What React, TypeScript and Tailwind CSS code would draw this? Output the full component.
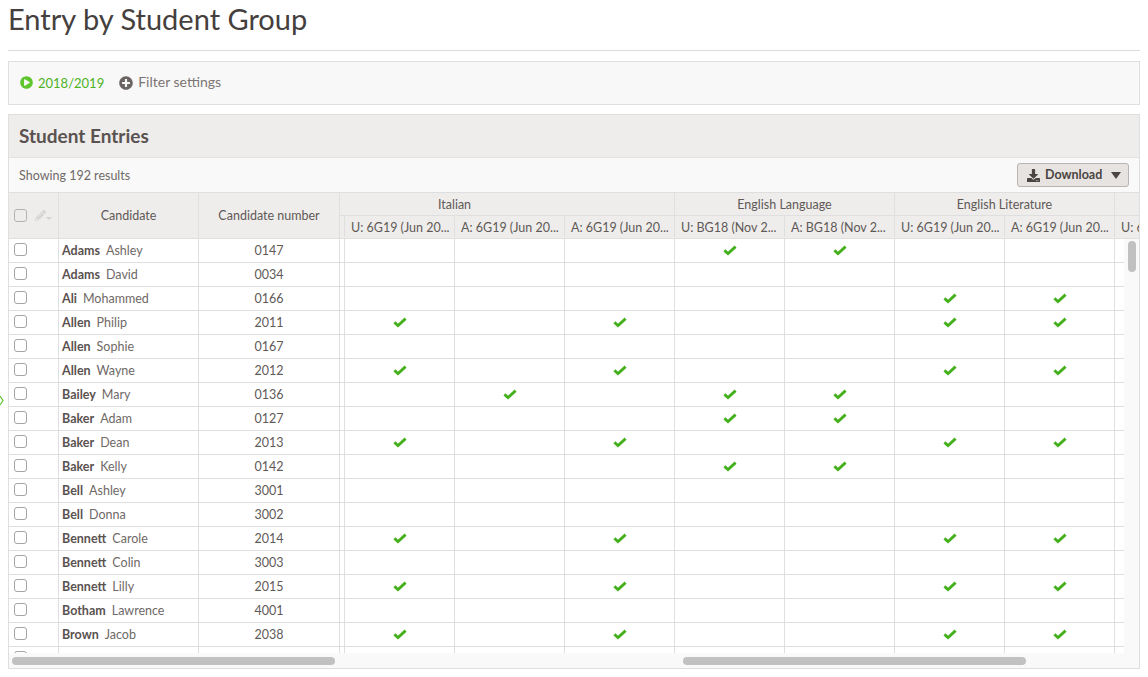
import { FaDownload, FaPlayCircle, FaPlusCircle, FaPencilAlt } from "react-icons/fa";

const rows: [string, string, string, number[]][] = [
  ["Adams", "Ashley", "0147", [3, 4]],
  ["Adams", "David", "0034", []],
  ["Ali", "Mohammed", "0166", [5, 6]],
  ["Allen", "Philip", "2011", [0, 2, 5, 6]],
  ["Allen", "Sophie", "0167", []],
  ["Allen", "Wayne", "2012", [0, 2, 5, 6]],
  ["Bailey", "Mary", "0136", [1, 3, 4]],
  ["Baker", "Adam", "0127", [3, 4]],
  ["Baker", "Dean", "2013", [0, 2, 5, 6]],
  ["Baker", "Kelly", "0142", [3, 4]],
  ["Bell", "Ashley", "3001", []],
  ["Bell", "Donna", "3002", []],
  ["Bennett", "Carole", "2014", [0, 2, 5, 6]],
  ["Bennett", "Colin", "3003", []],
  ["Bennett", "Lilly", "2015", [0, 2, 5, 6]],
  ["Botham", "Lawrence", "4001", []],
  ["Brown", "Jacob", "2038", [0, 2, 5, 6]],
  ["", "", "", []],
];

const groups = [
  { name: "Italian", cls: "w-[335px] pl-[5px] pr-[110px]" },
  { name: "English Language", cls: "w-[220px]" },
  { name: "English Literature", cls: "w-[220px]" },
  { name: "", cls: "w-[110px]" },
];

const subs = [
  "U: 6G19 (Jun 20...",
  "A: 6G19 (Jun 20...",
  "A: 6G19 (Jun 20...",
  "U: BG18 (Nov 2...",
  "A: BG18 (Nov 2...",
  "U: 6G19 (Jun 20...",
  "A: 6G19 (Jun 20...",
  "U: 6G19 (Jun 20...",
];

function Box() {
  return <span className="block h-[13px] w-[13px] rounded-[3px] border border-[#a8a4a2] bg-white" />;
}

function Tick() {
  return (
    <svg width="14" height="11" viewBox="0 0 14 11">
      <path d="M1.4 5.4 L5 8.6 L12.6 1.6" fill="none" stroke="#43b01c" strokeWidth="2.8" />
    </svg>
  );
}

export default function App() {
  return (
    <div className="h-[677px] w-[1148px] overflow-hidden bg-white px-2 font-['Lato','Noto_Sans',sans-serif] text-[12.5px] text-[#5f5957]">
      <h1 className="h-[51px] border-b border-[#dcdcdc] pt-[1px] text-[29px] leading-[36px] text-[#45403e]">
        Entry by Student Group
      </h1>
      <div className="mt-[10px] flex h-[44px] w-[1132px] items-center border border-[#dfdfdf] bg-[#f8f8f8] pb-[1px] pl-[11px] text-[14px]">
        <FaPlayCircle className="mr-[5px] text-[13px] text-[#5ec52c]" />
        <span className="text-[13px] leading-[16px] text-[#4cb324]">2018/2019</span>
        <FaPlusCircle className="ml-[15px] mr-[5px] text-[14px] text-[#6b6462]" />
        <span className="-translate-y-px text-[#7b7573]">Filter settings</span>
      </div>

      <div className="mt-[9px] w-[1132px] border border-[#dfdfdf]">
        <div className="flex h-[43px] items-center border-b border-[#e2e2e2] bg-[#eeedeb] pl-[10px] text-[19px] font-bold text-[#5a5250]">
          Student Entries
        </div>
        <div className="flex h-[34px] items-center justify-between bg-[#f9f9f9] px-[10px] text-[#6f6967]">
          <span className="pt-[2px]">Showing 192 results</span>
          <button className="flex h-[24px] w-[112px] items-center rounded-[3px] border border-[#b9b4b1] bg-[#e6e3e1] pl-[9px] text-[12.5px] font-bold text-[#4b4442]">
            <FaDownload className="mr-[5px] text-[13px]" />
            Download
            <svg width="10" height="7" viewBox="0 0 10 7" className="ml-[9px]">
              <path d="M0 0 H10 L5 7 Z" fill="#4b4442" />
            </svg>
          </button>
        </div>

        <div className="flex">
          <div className="w-[331px] shrink-0">
            <div className="flex h-[47px] border-y border-[#dfdfdf] bg-[#eeedeb]">
              <div className="flex w-[50px] items-center gap-[8px] border-r border-[#dfdfdf] pl-[5px]">
                <span className="block h-[13px] w-[13px] rounded-[3px] border border-[#b5b1af] bg-[#eeedeb]" />
                <span className="flex items-end">
                  <FaPencilAlt className="text-[11px] text-[#d6d4d2]" />
                  <span className="mb-[1px] h-0 w-0 border-x-[3px] border-t-[3px] border-x-transparent border-t-[#d6d4d2]" />
                </span>
              </div>
              <div className="flex w-[140px] items-center justify-center border-r border-[#dfdfdf] pt-[2px]">Candidate</div>
              <div className="flex w-[141px] items-center justify-center border-r border-[#dfdfdf] pt-[2px]">Candidate number</div>
            </div>
            <div className="h-[414px] overflow-hidden">
              {rows.map((r, i) => (
                <div key={i} className="flex h-[24px] border-b border-[#dfdfdf]">
                  <div className="w-[50px] border-r border-[#dfdfdf] pl-[5px] pt-[4px]">
                    <Box />
                  </div>
                  <div className="flex w-[140px] items-center gap-[6px] border-r border-[#dfdfdf] pl-[3px] pt-[2px] text-[#6f6967]">
                    <b className="text-[#5a5250]">{r[0]}</b>
                    <span>{r[1]}</span>
                  </div>
                  <div className="flex w-[141px] items-center justify-center border-r border-[#dfdfdf] pt-[2px]">{r[2]}</div>
                </div>
              ))}
            </div>
            <div className="flex h-[15px] items-center bg-[#f9f9f9] pl-[3px] pr-[5px]">
              <div className="h-[8px] w-full rounded-full bg-[#c1c1c1]" />
            </div>
          </div>

          <div className="min-w-0 flex-1 overflow-hidden">
            <div className="h-[47px] overflow-hidden border-y border-[#dfdfdf] bg-[#eeedeb]">
              <div className="flex h-[23px] w-[900px] border-b border-[#dfdfdf]">
                {groups.map((g, i) => (
                  <div key={i} className={`${g.cls} flex shrink-0 items-center justify-center border-r border-[#dfdfdf] pt-[2px] text-[12.5px]`}>
                    {g.name}
                  </div>
                ))}
              </div>
              <div className="flex h-[21px] w-[900px] pl-[4px]">
                {subs.map((s, i) => (
                  <div key={i} className="w-[110px] shrink-0 overflow-hidden whitespace-nowrap border-l border-[#dfdfdf] pl-[6px] pt-[1px] text-[12.5px] leading-[22px]">
                    {s}
                  </div>
                ))}
              </div>
            </div>
            <div className="flex h-[414px]">
              <div className="min-w-0 flex-1 overflow-hidden">
                {rows.map((r, i) => (
                  <div key={i} className="flex h-[24px] w-[900px] border-b border-[#dfdfdf] pl-[4px]">
                    {subs.map((_, c) => (
                      <div key={c} className="flex w-[110px] shrink-0 items-center justify-center border-l border-[#dfdfdf]">
                        {r[3].includes(c) && <Tick />}
                      </div>
                    ))}
                  </div>
                ))}
              </div>
              <div className="w-[15px] shrink-0 bg-[#f9f9f9] pl-[4px] pt-[2px]">
                <div className="h-[31px] w-[8px] rounded-full bg-[#c1c1c1]" />
              </div>
            </div>
            <div className="flex h-[15px] items-center bg-[#f9f9f9] pl-[343px] pr-[113px]">
              <div className="h-[8px] w-full rounded-full bg-[#c1c1c1]" />
            </div>
          </div>
        </div>
      </div>
      <svg className="absolute left-0 top-[395px]" width="4" height="11" viewBox="0 0 4 11">
        <path d="M0 1 L3 5.5 L0 10" fill="none" stroke="#5ec52c" strokeWidth="1.2" />
      </svg>
    </div>
  );
}
